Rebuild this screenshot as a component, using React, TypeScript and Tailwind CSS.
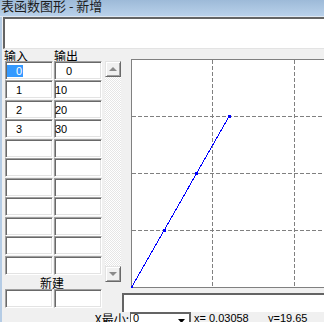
import React from 'react';

const rows = [
  { a: '0', b: '0', sel: true },
  { a: '1', b: '10' },
  { a: '2', b: '20' },
  { a: '3', b: '30' },
  { a: '', b: '' },
  { a: '', b: '' },
  { a: '', b: '' },
  { a: '', b: '' },
  { a: '', b: '' },
  { a: '', b: '' },
  { a: '', b: '' },
];

const sunken =
  'bg-white border border-t-[#a0a0a0] border-l-[#a0a0a0] border-b-white border-r-white shadow-[inset_1px_1px_0_#696969,inset_-1px_-1px_0_#e3e3e3]';

const raised =
  'bg-[#f0f0f0] border border-t-[#e3e3e3] border-l-[#e3e3e3] border-b-[#696969] border-r-[#696969] shadow-[inset_1px_1px_0_#ffffff,inset_-1px_-1px_0_#a0a0a0]';

function Cell({ children }: { children?: React.ReactNode }) {
  return <div className={`h-[19px] w-[48px] flex items-center text-[11px] leading-[12px] ${sunken}`}>{children}</div>;
}

function Chart() {
  const pts = [
    [0, 0],
    [1, 10],
    [2, 20],
    [3, 30],
  ].map(([x, y]) => [0.5 + x * 32.5, 228.5 - y * 5.7]);

  return (
    <svg width="330" height="229" className="block" shapeRendering="crispEdges">
      <rect x="0.5" y="0.5" width="328" height="228" fill="#ffffff" stroke="#808080" />
      {[81.5, 163.5].map((x) => (
        <line key={x} x1={x} y1="1" x2={x} y2="228" stroke="#808080" strokeDasharray="4 2" />
      ))}
      {[57.5, 114.5, 171.5].map((y) => (
        <line key={y} x1="1" y1={y} x2="328" y2={y} stroke="#808080" strokeDasharray="4 2" />
      ))}
      <polyline points={pts.map((p) => p.join(',')).join(' ')} fill="none" stroke="#0000ff" />
      {pts.map(([x, y], i) => (
        <rect key={i} x={x - 1.5} y={y - 1.5} width="3" height="3" fill="#0000ff" />
      ))}
    </svg>
  );
}

export default function App() {
  return (
    <div className="w-[324px] h-[322px] overflow-hidden bg-[#f0f0f0] text-black font-['Liberation_Sans','Noto_Sans_CJK_SC',sans-serif]">
      {/* title bar */}
      <div className="h-[16px] overflow-hidden bg-gradient-to-b from-[#9dbad8] to-[#b9d1ea]">
        <div className="-mt-[3px] pl-[1px] text-[13px] leading-[17px] text-[#1c1c1c] font-['Noto_Sans_CJK_SC',sans-serif]">
          表函数图形 - 新增
        </div>
      </div>
      <div className="h-[1px] bg-[#dfe8f2]" />

      <div className="flex h-[305px]">
        <div className="w-[2px] shrink-0 bg-[#b5cce5]" />
        <div className="flex flex-col min-w-0 flex-1 overflow-hidden">
          {/* top text box */}
          <div className="ml-[1px] h-[32px] w-[340px] shrink-0 bg-white border-t-2 border-l-2 border-t-[#646464] border-l-[#646464] border-b border-b-[#e3e3e3]" />

          <div className="flex h-[263px] shrink-0">
            {/* input / output grid */}
            <div className="w-[100px] shrink-0 flex flex-col">
              <div className="h-[12px] flex text-[12px] leading-[13px] font-['Noto_Sans_CJK_SC',sans-serif]">
                <span className="w-[52px] pl-[2px]">输入</span>
                <span>输出</span>
              </div>
              <div className="pl-[3px] flex flex-col">
                {rows.map((r, i) => (
                  <div key={i} className={`flex gap-[1px] ${i % 2 ? 'h-[20px]' : 'h-[19px]'}`}>
                    <Cell>
                      {r.sel ? (
                        <span className="ml-[1px] pl-[9px] pr-[1px] h-[12px] bg-[#3399ff] text-white">{r.a}</span>
                      ) : (
                        <span className="pl-[10px]">{r.a}</span>
                      )}
                    </Cell>
                    <Cell>
                      <span className={r.b.length === 1 ? 'pl-[11px]' : 'pl-0'}>{r.b}</span>
                    </Cell>
                  </div>
                ))}
                <div className="h-[14px] pr-[3px] text-center text-[12px] leading-[16px] font-['Noto_Sans_CJK_SC',sans-serif]">
                  新建
                </div>
                <div className="flex gap-[1px]">
                  <Cell />
                  <Cell />
                </div>
              </div>
            </div>

            {/* scrollbar */}
            <div className="ml-[3px] mt-[12px] w-[16px] h-[221px] shrink-0 flex flex-col">
              <div className={`h-[16px] flex items-center justify-center ${raised}`}>
                <svg width="8" height="4" viewBox="0 0 8 4">
                  <path d="M0 4 L4 0 L8 4 Z" fill="#8a8a8a" />
                </svg>
              </div>
              <div className="flex-1 bg-[image:repeating-conic-gradient(#ffffff_0_25%,#e6e6e6_0_50%)] bg-[length:2px_2px]" />
              <div className={`h-[16px] flex items-center justify-center ${raised}`}>
                <svg width="8" height="4" viewBox="0 0 8 4">
                  <path d="M0 0 L8 0 L4 4 Z" fill="#8a8a8a" />
                </svg>
              </div>
            </div>

            {/* chart + note box */}
            <div className="flex-1 min-w-0 overflow-hidden pt-[10px] flex flex-col">
              <div className="ml-[10px] h-[229px]">
                <Chart />
              </div>
              <div className="ml-[1px] mt-[5px] h-[19px] w-[240px] shrink-0 bg-white border-t-2 border-l-2 border-t-[#646464] border-l-[#646464]" />
            </div>
          </div>

          {/* bottom row */}
          <div className="flex h-[10px] text-[11px] leading-[12px] whitespace-nowrap">
            <div className="w-[128px] shrink-0 text-right pr-[1px] text-[12px] font-['Noto_Sans_CJK_SC',sans-serif] leading-[13px]">
              X最小:
            </div>
            <div className="w-[59px] shrink-0 flex bg-white border-t-2 border-l border-t-[#646464] border-l-[#646464]">
              <span className="flex-1 pl-[2px] -mt-[2px]">0</span>
              <div className="w-[15px] flex justify-center pt-[5px]">
                <svg width="7" height="4" viewBox="0 0 7 4">
                  <path d="M0 0 L7 0 L3.5 4 Z" fill="#000000" />
                </svg>
              </div>
            </div>
            <div className="flex-1 flex border-l-2 border-l-[#646464] pl-[3px]">
              <span className="w-[74px]">x= 0.03058</span>
              <span>y=19.65</span>
            </div>
          </div>
        </div>
      </div>
    </div>
  );
}
